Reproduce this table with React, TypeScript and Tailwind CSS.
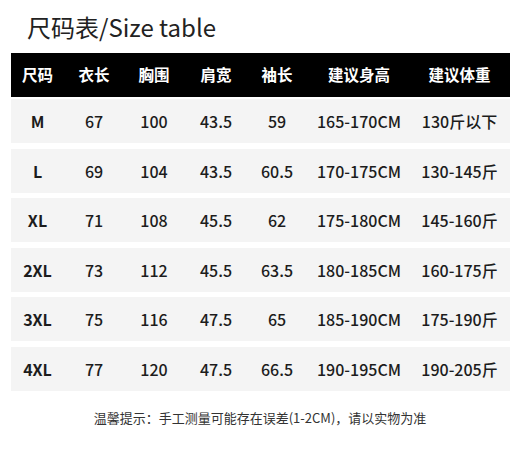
const HEADERS = ["尺码", "衣长", "胸围", "肩宽", "袖长", "建议身高", "建议体重"];

const ROWS = [
  ["M", "67", "100", "43.5", "59", "165-170CM", "130斤以下"],
  ["L", "69", "104", "43.5", "60.5", "170-175CM", "130-145斤"],
  ["XL", "71", "108", "45.5", "62", "175-180CM", "145-160斤"],
  ["2XL", "73", "112", "45.5", "63.5", "180-185CM", "160-175斤"],
  ["3XL", "75", "116", "47.5", "65", "185-190CM", "175-190斤"],
  ["4XL", "77", "120", "47.5", "66.5", "190-195CM", "190-205斤"],
];

const GRID = "grid grid-cols-[53px_60px_60px_64px_58px_106px_95px] items-center";

export default function App() {
  return (
    <div
      className="h-[461px] w-[520px] bg-white text-[#1c1c1c]"
      style={{ fontFamily: '"Noto Sans CJK SC", "Noto Sans", sans-serif' }}
    >
      <h1 className="pl-[27px] pt-[9px] text-[24px] leading-[36px] font-normal text-[#222]">
        尺码表/Size table
      </h1>

      <div className="mx-[11px] mt-[8px] w-[499px]">
        {/* header */}
        <div className={`${GRID} h-[44px] bg-black text-[15.5px] font-bold text-white`}>
          {HEADERS.map((h) => (
            <div key={h} className="text-center">
              {h}
            </div>
          ))}
        </div>

        {/* rows */}
        <div className="mt-[2px] flex flex-col gap-[5.6px]">
          {ROWS.map((row) => (
            <div key={row[0]} className={`${GRID} h-[44px] bg-[#f4f4f4] text-[16px] font-medium`}>
              {row.map((cell, i) => (
                <div key={i} className={`text-center ${i === 0 ? "font-bold" : ""}`}>
                  {cell}
                </div>
              ))}
            </div>
          ))}
        </div>
      </div>

      <p className="mt-[17px] text-center text-[13px] text-[#333]">
        温馨提示：手工测量可能存在误差(1-2CM)，请以实物为准
      </p>
    </div>
  );
}
